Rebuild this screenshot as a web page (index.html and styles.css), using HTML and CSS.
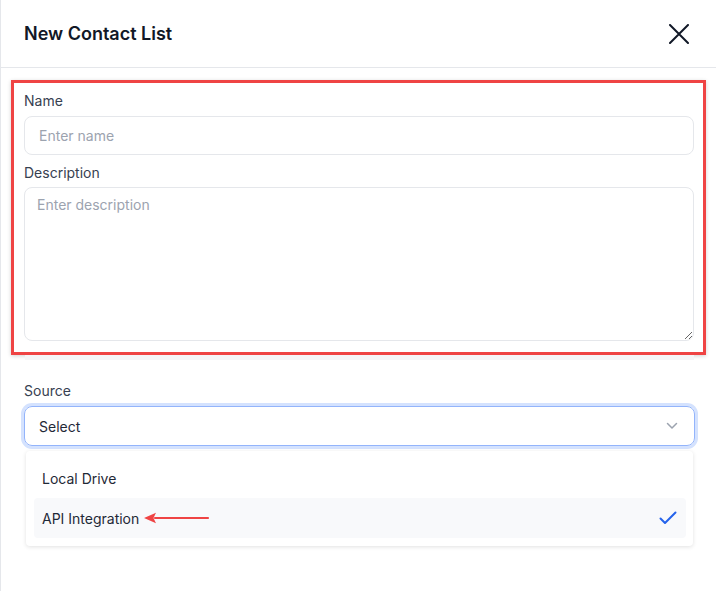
FILE: index.html
```html
<!DOCTYPE html>
<html lang="en">
<head>
    <meta charset="UTF-8">
    <meta name="viewport" content="width=device-width, initial-scale=1.0">
    <title>New Contact List</title>
    <link rel="stylesheet" href="styles.css">
</head>
<body>
<div class="modal">
    <div class="modal-header">
        <h2 class="modal-title">New Contact List</h2>
        <button class="close-button" aria-label="Close">
            <svg width="20" height="20" viewBox="0 0 20 20" fill="none" stroke="#111827" stroke-width="2" stroke-linecap="round">
                <path d="M1 1L19 19M19 1L1 19"/>
            </svg>
        </button>
    </div>

    <div class="modal-body">
        <div class="highlight-box">
            <label class="field-label" for="name">Name</label>
            <input class="text-input" id="name" type="text" placeholder="Enter name">

            <label class="field-label label-gap" for="description">Description</label>
            <textarea class="text-area" id="description" placeholder="Enter description"></textarea>
        </div>
        <div class="box-shadow-strip"></div>

        <div class="source-field">
            <label class="field-label">Source</label>
            <div class="select-box">
                <span>Select</span>
                <svg width="12" height="8" viewBox="0 0 12 8" fill="none" stroke="#9ca3af" stroke-width="1.5" stroke-linecap="round" stroke-linejoin="round">
                    <path d="M1.5 1.5L6 6L10.5 1.5"/>
                </svg>
            </div>
            <ul class="dropdown">
                <li class="dropdown-item">Local Drive</li>
                <li class="dropdown-item selected">
                    <span class="item-text">API Integration
                        <svg class="annotation-arrow" width="66" height="12" viewBox="0 0 66 12" fill="none">
                            <path d="M11 6H64" stroke="#ef4444" stroke-width="2.2" stroke-linecap="round"/>
                            <path d="M0 6L12 0.8L9.5 6L12 11.2Z" fill="#ef4444"/>
                        </svg>
                    </span>
                    <svg width="18" height="14" viewBox="0 0 18 14" fill="none" stroke="#2563eb" stroke-width="2" stroke-linecap="round" stroke-linejoin="round">
                        <path d="M1.5 7.5L6 12L16.5 1.5"/>
                    </svg>
                </li>
            </ul>
        </div>
    </div>
</div>
</body>
</html>
```

FILE: styles.css
```css
* {
    box-sizing: border-box;
}
body {
    margin: 0;
    background-color: #ffffff;
    font-family: Inter, "Noto Sans", Arial, sans-serif;
    color: #1f2937;
}
.modal {
    min-height: 591px;
    border-left: 1px solid #e5e7eb;
}
.modal-header {
    display: flex;
    align-items: center;
    justify-content: space-between;
    height: 68px;
    padding: 0 27px 0 23px;
    border-bottom: 1px solid #e5e7eb;
}
.modal-title {
    margin: 0;
    font-size: 18px;
    font-weight: 600;
    color: #111827;
}
.close-button {
    display: flex;
    padding: 0;
    background: none;
    border: none;
    cursor: pointer;
}
.modal-body {
    padding: 12px 10px 0 10px;
}
.highlight-box {
    display: flex;
    flex-direction: column;
    padding: 8px 9px 11px 10px;
    border: 3px solid #ef4444;
    box-shadow: 0 1px 4px rgba(0, 0, 0, 0.18);
}
.field-label {
    display: block;
    font-size: 14px;
    line-height: 20px;
    font-weight: 400;
    color: #374151;
    margin-bottom: 5px;
}
.label-gap {
    margin-top: 8px;
    margin-bottom: 4px;
}
.text-input, .text-area {
    width: 100%;
    font-family: inherit;
    font-size: 14px;
    color: #1f2937;
    border: 1px solid #e5e7eb;
    border-radius: 8px;
    background-color: #ffffff;
    outline: none;
}
.text-input {
    height: 39px;
    padding: 0 14px;
}
.text-area {
    height: 154px;
    padding: 8px 12px;
    resize: vertical;
}
.text-input::placeholder, .text-area::placeholder {
    color: #9ca3af;
}
.box-shadow-strip {
    height: 5px;
    margin: 0 12px 0 14px;
    background-color: #f5f5f7;
}
.source-field {
    padding: 21px 11px 0 13px;
}
.select-box {
    display: flex;
    align-items: center;
    justify-content: space-between;
    height: 40px;
    padding: 0 16px 0 14px;
    font-size: 14px;
    color: #1f2937;
    border: 1px solid #93b4fb;
    border-radius: 8px;
    box-shadow: 0 0 0 3px #d4e2fe;
}
.dropdown {
    list-style-type: none;
    margin: 5px 2px 0 2px;
    padding: 7px 7px 8px 8px;
    border-radius: 4px;
    background-color: #ffffff;
    box-shadow: 0 1px 4px rgba(0, 0, 0, 0.12);
}
.dropdown-item {
    display: flex;
    align-items: center;
    justify-content: space-between;
    height: 40px;
    padding: 0 9px 0 8px;
    font-size: 14px;
    color: #1f2937;
    border-radius: 4px;
}
.dropdown-item.selected {
    background-color: #f8f9fb;
}
.item-text {
    display: flex;
    align-items: center;
}
.annotation-arrow {
    margin-left: 5px;
}
```
